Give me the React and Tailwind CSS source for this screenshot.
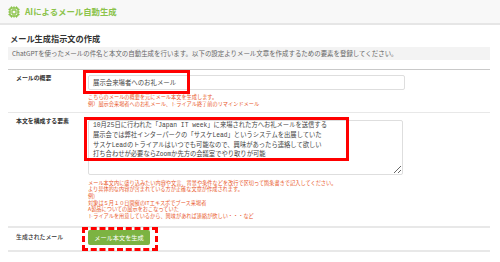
import { Cpu } from 'lucide-react'

const bodyText = [
  '10月25日に行われた「Japan IT week」に来場された方へお礼メールを送信する',
  '展示会では弊社インターパークの「サスケLead」というシステムを出展していた',
  'サスケLeadのトライアルはいつでも可能なので、興味があったら連絡して欲しい',
  '打ち合わせが必要ならZoomか先方の会議室でやり取りが可能',
].join('\n')

const bodyHints = [
  'メール本文内に盛り込みたい内容や文言、背景や条件などを改行で区切って箇条書きで記入してください。',
  'より具体的な内容が含まれている方が正確な文章が作成されます。',
  '例)',
  '対象は５月１０日開催のITエキスポでブース来場者',
  'A製品についての展示をおこなっていた',
  'トライアルを用意しているから、興味があれば連絡が欲しい・・・など',
]

function Label({ children, bold = true }) {
  return (
    <div className={`w-[80px] shrink-0 pl-2 text-[5.9px] leading-[10px] text-[#333] ${bold ? 'font-bold' : 'font-medium'}`}>
      {children}
    </div>
  )
}

export default function App() {
  return (
    <div className="w-[500px] h-[262px] overflow-hidden bg-white font-['Noto_Sans_CJK_JP','Liberation_Sans',sans-serif]">
      <header className="h-[25px] bg-[#f8f8f8] border-b-2 border-[#e6e6e6] flex items-center gap-[5px] pl-[8px]">
        <Cpu className="w-[12px] h-[12px] text-[#8bc34a]" strokeWidth={2.6} />
        <span className="text-[8.4px] font-bold text-[#8bc34a] leading-none">AIによるメール自動生成</span>
      </header>

      <div className="mx-2 w-[482px]">
        <h2 className="pt-[7px] pl-[2px] text-[8.2px] font-bold text-[#333] leading-[12px]">メール生成指示文の作成</h2>
        <div className="mt-[3px] h-[13px] bg-[#f3f3f3] pl-[4px] text-[6.45px] text-[#666] leading-[13px] whitespace-nowrap">
          ChatGPTを使ったメールの件名と本文の自動生成を行います。以下の設定よりメール文章を作成するための要素を登録してください。
        </div>

        <div className="mt-[9px] border-t border-[#c9c9c9] flex h-[43px]">
          <div className="pt-[3px]"><Label>メールの概要</Label></div>
          <div className="pt-[5px]">
            <div className="relative w-[317px] h-[15px] border border-[#dedede] rounded-[2px] pl-[4px] text-[6.4px] leading-[13px] text-[#444]">
              展示会来場者へのお礼メール
              <div className="absolute left-[-6px] top-[-6px] w-[107px] h-[24px] border-[3px] border-[#ff0000]" />
            </div>
            <div className="mt-[2.5px] text-[5.2px] leading-[7px] text-[#e9592c] whitespace-nowrap">
              <div>こちらのメールの概要を元にメール本文を生成します。</div>
              <div>例）展示会来場者へのお礼メール、トライアル終了前のリマインドメール</div>
            </div>
          </div>
        </div>

        <div className="border-t border-[#e8e8e8] flex h-[114px]">
          <div className="pt-[3px]"><Label>本文を構成する要素</Label></div>
          <div className="pt-[7px]">
            <div className="relative">
              <textarea
                readOnly
                value={bodyText}
                className="block w-[315px] h-[55px] border border-[#dedede] rounded-[2px] pl-[4px] pt-0 text-[6.3px] leading-[9.8px] text-[#444] outline-none resize-y overflow-hidden font-['Liberation_Mono','Noto_Sans_CJK_JP',monospace] whitespace-pre"
              />
              <div className="absolute left-[-4px] top-[-3px] w-[265px] h-[44px] border-[3px] border-[#ff0000] pointer-events-none" />
            </div>
            <div className="mt-[4.5px] text-[5.2px] leading-[6.7px] text-[#e9592c] whitespace-nowrap">
              {bodyHints.map((line) => (
                <div key={line}>{line}</div>
              ))}
            </div>
          </div>
        </div>

        <div className="border-t-2 border-[#e8e8e8] flex h-[26px] border-b-2">
          <div className="pt-[4px]"><Label bold={false}>生成されたメール</Label></div>
          <div className="pt-[2px]">
            <div className="relative">
              <button className="block w-[62px] h-[15px] bg-[#7cb342] rounded-[2px] text-white text-[6.2px] leading-[15px]">
                メール本文を生成
              </button>
              <div className="absolute left-[-6px] top-[-3px] w-[76px] h-[24px] border-[3px] border-dashed border-[#ff0000] pointer-events-none" />
            </div>
          </div>
        </div>
      </div>
    </div>
  )
}
